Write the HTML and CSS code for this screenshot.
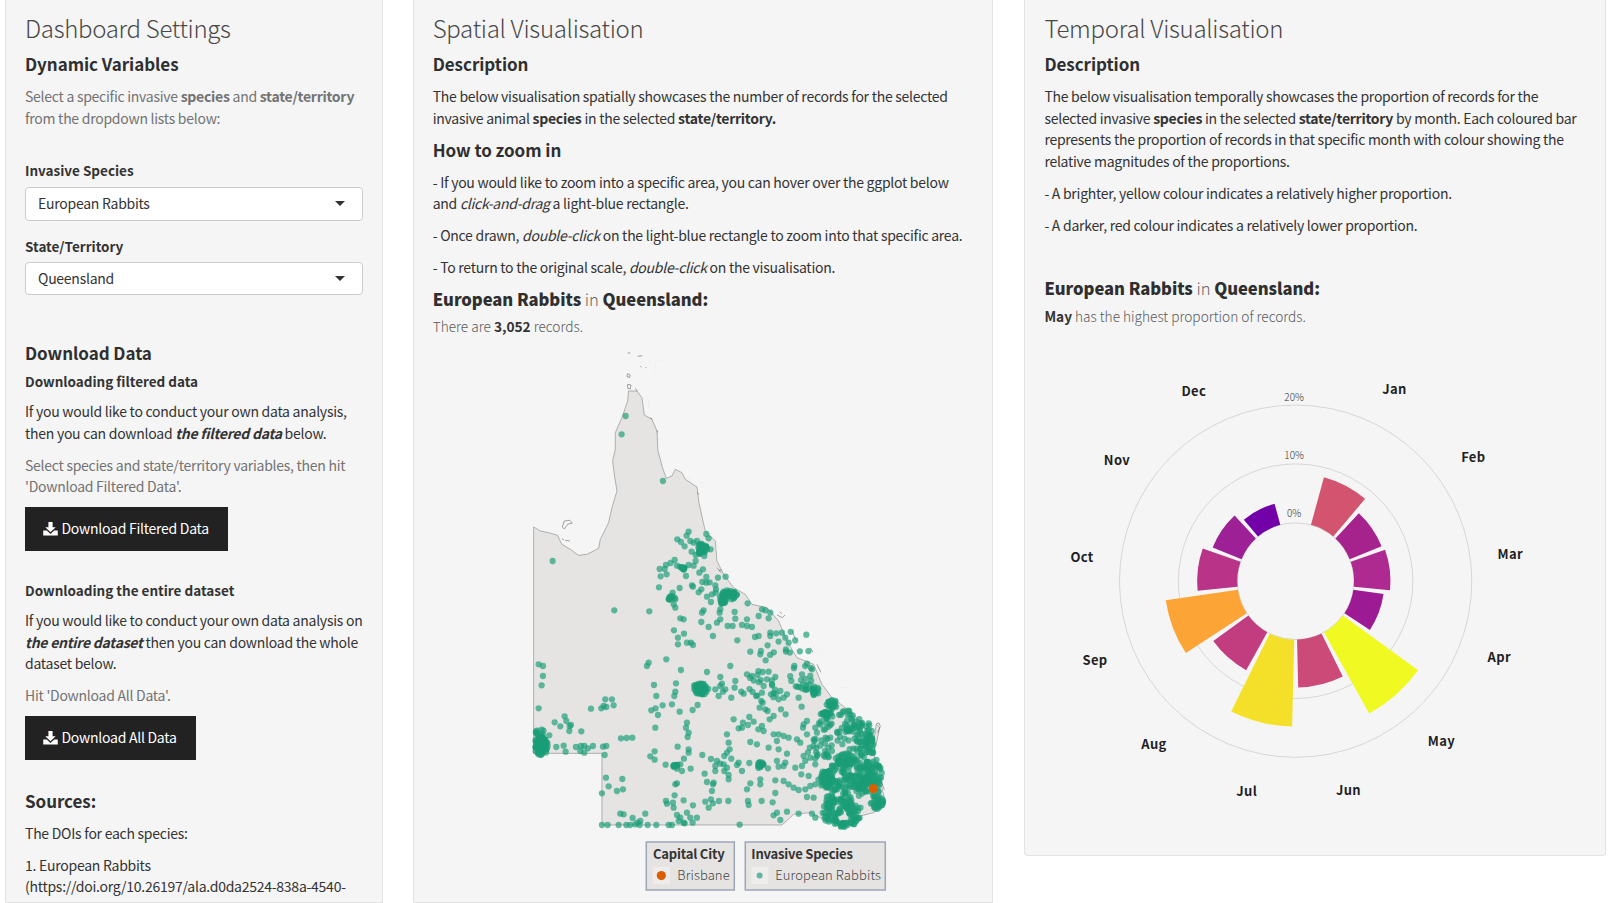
FILE: index.html
```html
<!DOCTYPE html>
<html lang="en">
<head>
<meta charset="utf-8">
<title>Invasive Species Dashboard</title>
<link rel="stylesheet" href="styles.css">
</head>
<body>
<main class="dashboard">
  <section class="panel panel-side">
    <h2 class="title">Dashboard Settings</h2>
    <h4 class="head head-first">Dynamic Variables</h4>
    <p class="muted">Select a specific invasive <b>species</b> and <b>state/territory</b> from the dropdown lists below:</p>
    <label class="label label-first">Invasive Species</label>
    <div class="select"><span>European Rabbits</span><i class="caret"></i></div>
    <label class="label label-second">State/Territory</label>
    <div class="select"><span>Queensland</span><i class="caret"></i></div>
    <h4 class="head head-download">Download Data</h4>
    <h5 class="sub sub-first">Downloading filtered data</h5>
    <p class="tight">If you would like to conduct your own data analysis, then you can download <b><i>the filtered data</i></b> below.</p>
    <p class="muted">Select species and state/territory variables, then hit 'Download Filtered Data'.</p>
    <a class="btn btn-filtered"><svg class="dl" viewBox="0 0 14 13"><path d="M5 0h4v5h3L7 9.8 2 5h3z"/><path d="M0 8.2h3.4L7 11.6l3.6-3.4H14V13H0z"/></svg>Download Filtered Data</a>
    <h5 class="sub sub-second">Downloading the entire dataset</h5>
    <p>If you would like to conduct your own data analysis on <b><i>the entire dataset</i></b> then you can download the whole dataset below.</p>
    <p class="muted">Hit 'Download All Data'.</p>
    <a class="btn btn-all"><svg class="dl" viewBox="0 0 14 13"><path d="M5 0h4v5h3L7 9.8 2 5h3z"/><path d="M0 8.2h3.4L7 11.6l3.6-3.4H14V13H0z"/></svg>Download All Data</a>
    <h4 class="head head-sources">Sources:</h4>
    <p>The DOIs for each species:</p>
    <p>1. European Rabbits (https://doi.org/10.26197/ala.d0da2524-838a-4540-</p>
  </section>

  <section class="panel panel-main">
    <h2 class="title">Spatial Visualisation</h2>
    <h4 class="head head-first">Description</h4>
    <p>The below visualisation spatially showcases the number of records for the selected invasive animal <b>species</b> in the selected <b>state/territory.</b></p>
    <h4 class="head head-zoom">How to zoom in</h4>
    <p>- If you would like to zoom into a specific area, you can hover over the ggplot below and <i>click-and-drag</i> a light-blue rectangle.</p>
    <p>- Once drawn, <i>double-click</i> on the light-blue rectangle to zoom into that specific area.</p>
    <p>- To return to the original scale, <i>double-click</i> on the visualisation.</p>
    <h4 class="head head-result head-spatial"><b>European Rabbits</b> <span class="thin">in</span> <b>Queensland:</b></h4>
    <p class="note">There are <b>3,052</b> records.</p>
    <svg class="map" viewBox="432.7 338 540 565" id="map">
      <g transform="translate(520 340) scale(.33333)">
        <path class="land" d="M40 558L60 570 85 575 112 583 118 597 125 610 150 625 175 643 200 640 235 622 240 595 265 545 275 500 290 450 282 400 277 360 285 325 285 275 305 230 322 180 325 150 350 150 365 170 372 222 395 235 410 270 413 330 425 375 438 412 455 405 465 385 485 395 495 415 530 438 535 480 548 540 555 570 585 600 590 660 610 700 640 740 675 760 695 790 740 800 775 840 800 900 830 950 880 970 905 1030 935 1070 975 1100 1020 1140 1040 1170 1062 1190 1068 1150 1078 1160 1070 1200 1060 1230 1070 1290 1085 1340 1095 1385 1060 1415 1000 1430 960 1460 940 1440 900 1430 870 1415 820 1420 785 1452 245 1452 245 1237 40 1237Z"/>
        <path class="isle" d="M322 36h8M352 46l14-2M360 75l4 4M375 78l3 3M322 98l8 4-2 8-8-4zM322 130l10 2-2 12-8-2zM345 142l6 8M390 230l6 4M410 268l2 6M532 455l4 6M132 540l16-2 8 8-14 4-10 14-6-6zM125 593l6 4M135 598l14 2M590 680l12 14M596 690l8-4M770 822l16 8 8-8M778 812l6 6M1068 1148l8-2 4 10-8 20M1082 1312l6 24 4 10M815 870l12 28M870 920l8 14M890 970l12 24"/>
        <path class="speck" d="M275 75h1M283 58h1M405 65v26M415 60l14-2M450 85h1M370 100v8M400 100h1M350 160h1M385 180v30M450 205h1M420 340l8 30M500 410l20 8M540 425h8M965 1040h24M1010 1085l10 8M840 885l30 20M880 920l24 20"/>
      </g>
      <g class="legend">
        <rect class="legend-box" x="646" y="841" width="88" height="48"/>
        <text class="legend-title" x="652.7" y="857.5">Capital City</text>
        <rect class="legend-key" x="652.7" y="866" width="17" height="17"/>
        <circle class="city" cx="661" cy="874.6" r="4.6"/>
        <text class="legend-text" x="677" y="879.4">Brisbane</text>
        <rect class="legend-box" x="745" y="841" width="140" height="48"/>
        <text class="legend-title" x="751" y="857.5">Invasive Species</text>
        <rect class="legend-key" x="751" y="866" width="17" height="17"/>
        <circle class="dot" cx="759.3" cy="874.6" r="3"/>
        <text class="legend-text" x="775" y="879.4">European Rabbits</text>
      </g>
    </svg>
  </section>

  <section class="panel panel-time">
    <h2 class="title">Temporal Visualisation</h2>
    <h4 class="head head-first">Description</h4>
    <p>The below visualisation temporally showcases the proportion of records for the selected invasive <b>species</b> in the selected <b>state/territory</b> by month. Each coloured bar represents the proportion of records in that specific month with colour showing the relative magnitudes of the proportions.</p>
    <p>- A brighter, yellow colour indicates a relatively higher proportion.</p>
    <p>- A darker, red colour indicates a relatively lower proportion.</p>
    <h4 class="head head-result head-time"><b>European Rabbits</b> <span class="thin">in</span> <b>Queensland:</b></h4>
    <p class="note"><b>May</b> has the highest proportion of records.</p>
    <svg class="rose" viewBox="1044.4 328 540 508">
      <g id="rose" transform="translate(1296 581.7)">
        <circle class="ring" r="176.5"/>
        <circle class="ring" r="117.5"/>
        <circle class="ring" r="58.5"/>
        <g id="bars"></g>
        <text class="pct" x="-1.5" y="-181">20%</text>
        <text class="pct" x="-1.5" y="-122">10%</text>
        <text class="pct" x="-1.5" y="-64">0%</text>
        <text class="month" x="99" y="-187.5">Jan</text>
        <text class="month" x="178" y="-119.5">Feb</text>
        <text class="month" x="215" y="-22.5">Mar</text>
        <text class="month" x="204" y="80.5">Apr</text>
        <text class="month" x="146" y="165.5">May</text>
        <text class="month" x="53" y="214.5">Jun</text>
        <text class="month" x="-49" y="215.5">Jul</text>
        <text class="month" x="-142" y="168.5">Aug</text>
        <text class="month" x="-201" y="83.5">Sep</text>
        <text class="month" x="-214" y="-19.5">Oct</text>
        <text class="month" x="-179" y="-116.5">Nov</text>
        <text class="month" x="-102" y="-185.5">Dec</text>
      </g>
    </svg>
  </section>
</main>
<script src="script.js"></script>
</body>
</html>
```
FILE: styles.css
```css
* { box-sizing: border-box; }
html, body { margin: 0; height: 903px; overflow: hidden; background: #fff; }
body {
  font-family: "Noto Sans CJK SC", "Source Sans Pro", "Open Sans", sans-serif;
  font-size: 14px;
  letter-spacing: -.26px;
  line-height: 21.43px;
  color: #333;
}
.dashboard { display: flex; align-items: flex-start; padding-left: 5px; }
.panel {
  background: #f5f5f5;
  border: 1px solid #e3e3e3;
  border-top: 0;
  padding: 8px 19px 19px;
  flex: none;
}
.panel-side { width: 378px; height: 903px; overflow: hidden; }
.panel-main { width: 580px; height: 903px; overflow: hidden; margin-left: 29.7px; }
.panel-time { width: 582px; height: 856px; overflow: hidden; margin-left: 31.7px; border-radius: 0 0 4px 4px; }
.title { margin: -1px 0 1px; font-size: 24px; letter-spacing: -.3px; line-height: 42px; font-weight: 300; color: #484848; }
.head { margin: 10.3px 0 11.8px; font-size: 17px; letter-spacing: -.05px; line-height: 20px; font-weight: 700; color: #2f2f2f; }
.head-first { margin-top: 5px; margin-bottom: 12.3px; }
.head-zoom { margin-top: 9.3px; margin-bottom: 11.8px; }
.head-download { margin: 47.5px 0 8.5px; }
.head-sources { margin: 31.2px 0 12px; }
.head-result { font-size: 16.6px; margin-top: 9.8px; margin-bottom: 7.3px; }
.head-spatial { margin-bottom: 6.3px; }
.head-time { margin-top: 42px; }
.sub { margin: 0 0 9.8px; font-size: 13.5px; letter-spacing: 0; line-height: 20px; font-weight: 700; }
.sub-first { margin-bottom: 10.3px; }
.sub-second { margin-top: 29.5px; }
p { margin: 0 0 10.7px; }
.tight { margin-bottom: 10.2px; }
.muted { color: #737373; }
.note { font-size: 13.7px; letter-spacing: 0; font-weight: 300; color: #595959; margin: 0; }
.note b { color: #333; font-weight: 700; }
.thin { font-weight: 300; color: #666; }
.label { display: block; font-size: 13.5px; letter-spacing: 0; line-height: 20px; font-weight: 700; margin: 0 0 7px; }
.label-first { margin-top: 31px; }
.label-second { margin-top: 15px; margin-bottom: 6px; }
.select {
  display: flex;
  align-items: center;
  justify-content: space-between;
  height: 33.5px;
  width: 100%;
  padding: 0 17px 0 12px;
  background: #fff;
  border: 1px solid #ccc;
  border-radius: 4px;
  color: #333;
}
.caret { width: 0; height: 0; border-left: 5px solid transparent; border-right: 5px solid transparent; border-top: 5px solid #333; }
.btn {
  display: flex;
  align-items: center;
  height: 43.5px;
  padding-left: 18px;
  margin-top: -.7px;
  background: #222;
  color: #fff;
}
.btn-filtered { width: 203px; }
.btn-all { width: 171px; margin-top: -1.2px; }
.dl { width: 15px; height: 13.5px; margin-right: 3.5px; fill: #fff; }
.map, .rose { display: block; width: 540px; }
.map { height: 565px; margin-top: 2px; }
.rose { height: 507px; margin-top: 1px; }
.land { fill: #e5e4e3; stroke: #8f8f8f; stroke-width: 2; }
.isle { fill: none; stroke: #555; stroke-width: 1.6; }
.speck { fill: none; stroke: #aaa; stroke-width: 1.2; stroke-dasharray: 1 4; }
.dot { fill: #1b9e77; fill-opacity: .68; }
.city { fill: #d95f02; }
.legend-box { fill: #e5e4e3; stroke: #9ba6b6; stroke-width: 1.5; }
.legend-key { fill: #eeedec; }
.legend-title { font-size: 13px; font-weight: 700; fill: #333; letter-spacing: -.2px; }
.legend-text { font-size: 13px; font-weight: 300; fill: #444; letter-spacing: .1px; }
.ring { fill: none; stroke: #d6d6d6; stroke-width: 1; }
.pct { font-size: 10px; font-weight: 300; fill: #333; text-anchor: middle; letter-spacing: 0; }
.month { font-size: 13px; font-weight: 700; fill: #1f1f1f; text-anchor: middle; letter-spacing: .35px; }
```
FILE: script.js
```js
// Seeded random so the point cloud is the same on each load.
var seed = 7;
function rnd() { seed = (seed * 16807) % 2147483647; return (seed - 1) / 2147483646; }

var SVGNS = "http://www.w3.org/2000/svg";
function el(name, attrs, parent) {
  var n = document.createElementNS(SVGNS, name);
  for (var k in attrs) n.setAttribute(k, attrs[k]);
  parent.appendChild(n);
  return n;
}

// Occurrence records, in crop coordinates: north half, then south half.
var north = [316,225,304,280,428,420,97,660,505,572,499,584,471,595,482,603,493,616,510,600,520,605,530,600,558,579,565,592,571,625,514,632,526,642,552,645,526,660,463,657,451,666,437,672,470,674,418,684,433,684,439,700,421,706,480,678,490,683,505,672,520,674,497,705,537,695,548,685,593,710,616,707,558,708,546,723,558,725,568,724,416,739,478,741,515,733,518,737,543,745,535,754,585,733,457,755,445,775,455,770,465,775,460,790,465,800,282,808,387,811,560,767,575,760,587,745,586,755,572,783,605,780,620,748,640,755,650,760,682,787,643,813,550,808,545,815,600,805,598,815,725,805,735,808,715,825,750,815,745,832,480,832,490,835,543,843,600,835,645,833,680,835];
var south = [461,28,473,50,473,70,491,38,500,65,512,65,518,72,565,18,590,5,622,15,637,15,665,12,680,15,695,18,578,45,651,58,704,48,715,45,750,35,750,45,742,73,690,92,722,90,720,100,736,118,785,35,795,50,805,65,797,85,438,115,385,125,380,135,482,147,630,135,560,153,822,135,860,128,875,145,870,165,845,160,866,190,55,130,68,135,68,165,64,193,401,192,467,187,465,212,462,225,408,225,600,168,605,188,600,195,645,180,615,205,608,212,595,225,585,205,633,230,643,200,663,212,670,218,697,213,680,160,695,165,712,162,727,153,745,152,765,168,740,175,755,178,730,195,755,190,725,215,752,220,723,240,727,245,718,260,735,265,742,270,782,265,780,210,775,235,790,230,800,220,837,198,835,230,844,257,796,280,760,285,748,295,730,330,714,325,640,295,687,288,668,305,700,302,683,312,665,320,655,322,725,315,760,340,790,345,805,350,775,340,770,360,745,380,710,370,690,363,775,385,800,398,830,355,840,365,860,340,860,300,850,310,848,320,885,320,890,335,930,350,880,375,850,405,825,440,855,420,845,435,843,460,865,465,885,430,870,410,890,405,910,403,918,400,212,263,243,262,255,235,250,255,258,258,275,235,280,253,55,262,393,268,406,262,427,253,455,250,478,272,517,267,532,252,413,282,405,320,500,305,497,320,505,335,502,348,302,352,319,351,336,350,103,304,133,286,120,316,138,300,148,315,152,312,147,330,183,331,87,343,108,378,130,374,136,392,167,378,182,375,192,375,180,390,192,395,203,382,218,375,248,377,258,375,253,402,472,377,505,385,505,395,403,391,390,406,403,416,546,402,491,413,436,431,572,414,460,437,470,435,480,430,470,443,485,450,511,443,553,458,560,483,580,485,575,510,578,490,465,490,470,487,620,340,625,365,628,385,620,395,612,405,633,413,590,420,600,428,585,435,610,430,620,440,585,450,612,450,625,462,625,475,655,425,650,432,665,450,687,426,715,432,720,435,743,442,770,420,775,437,795,425,790,435,765,478,720,475,720,490,690,487,680,505,765,516,790,480,805,490,820,500,835,507,855,505,870,495,885,490,257,470,306,474,265,496,290,510,308,505,245,517,463,523,458,545,437,540,440,548,460,560,490,538,518,553,555,542,565,560,572,535,578,547,596,540,624,540,683,540,685,552,724,540,757,544,770,575,760,583,780,597,800,572,835,578,875,578,885,590,860,528,880,530,300,578,310,580,375,578,337,591,360,600,352,605,345,610,470,582,480,590,500,575,510,590,530,590,475,600,490,605,517,605,245,612,262,612,295,612,318,612,330,612,358,612,382,612,408,612,445,612,455,612,493,607,658,611];
// Dense groups: centre x, centre y, half-width, half-height, count (south crop coords).
var clusters = [
  [545,-215,16,18,34],[625,-78,24,14,30],[603,-62,14,12,14],
  [540,205,24,18,42],[490,-160,10,6,8],[455,-68,10,8,8],
  [720,433,10,10,12],[465,435,9,6,7],[62,375,22,28,80],[60,338,16,14,10],
  [885,210,13,16,16],[935,250,17,14,16],[920,285,22,12,14],
  [985,470,80,60,180],[1055,470,32,60,60],[965,575,60,45,100],
  [915,475,22,26,28],[1035,380,28,30,30],[1000,310,26,22,18],
  [1048,345,10,5,6],[975,415,30,20,28],[1070,545,20,22,28],[930,540,16,16,16],
  [975,610,16,8,10],[950,300,60,40,34],[1000,355,60,38,34],[900,385,40,40,22],[1035,320,24,18,8],
  [810,90,70,70,12],[860,170,25,40,10],[790,210,60,50,9],[720,190,45,45,9]
];

var map = document.querySelector("#map > g");
function dot(x, y) { el("circle", { "class": "dot", cx: x, cy: y, r: 9.4 }, map); }
var i;
for (i = 0; i < north.length; i += 2) dot(north[i], north[i + 1]);
for (i = 0; i < south.length; i += 2) dot(south[i], south[i + 1] + 840);
clusters.forEach(function (c) {
  for (var n = 0; n < c[4]; n++) {
    var a = rnd() * Math.PI * 2, r = Math.sqrt(rnd());
    var x = Math.max(46, c[0] + Math.cos(a) * r * c[2]);
    dot(x, c[1] + 840 + Math.sin(a) * r * c[3]);
  }
});
el("circle", { "class": "city", cx: 1059, cy: 1343, r: 14 }, map);

// Monthly bars of the polar chart: outer radius in px, colour.
var bars = [
  [108, "#d3546f"], [93, "#a6238e"], [95, "#ae2a90"], [89, "#9c1b94"],
  [151.7, "#f0f921"], [106.6, "#cc4a78"], [145.7, "#f5e029"], [102, "#c23c80"],
  [131.5, "#fda436"], [98.7, "#b93488"], [89.8, "#9e2096"], [80.5, "#7201a8"]
];
var step = 360 / 13, half = step * 0.45, inner = 58.5, holder = document.getElementById("bars");
bars.forEach(function (b, n) {
  var mid = (n + 1) * step, a0 = (mid - half) * Math.PI / 180, a1 = (mid + half) * Math.PI / 180;
  var R = b[0];
  var d = "M" + inner * Math.sin(a0) + " " + -inner * Math.cos(a0) +
    "L" + R * Math.sin(a0) + " " + -R * Math.cos(a0) +
    "A" + R + " " + R + " 0 0 1 " + R * Math.sin(a1) + " " + -R * Math.cos(a1) +
    "L" + inner * Math.sin(a1) + " " + -inner * Math.cos(a1) +
    "A" + inner + " " + inner + " 0 0 0 " + inner * Math.sin(a0) + " " + -inner * Math.cos(a0) + "Z";
  el("path", { d: d, fill: b[1] }, holder);
});
```
